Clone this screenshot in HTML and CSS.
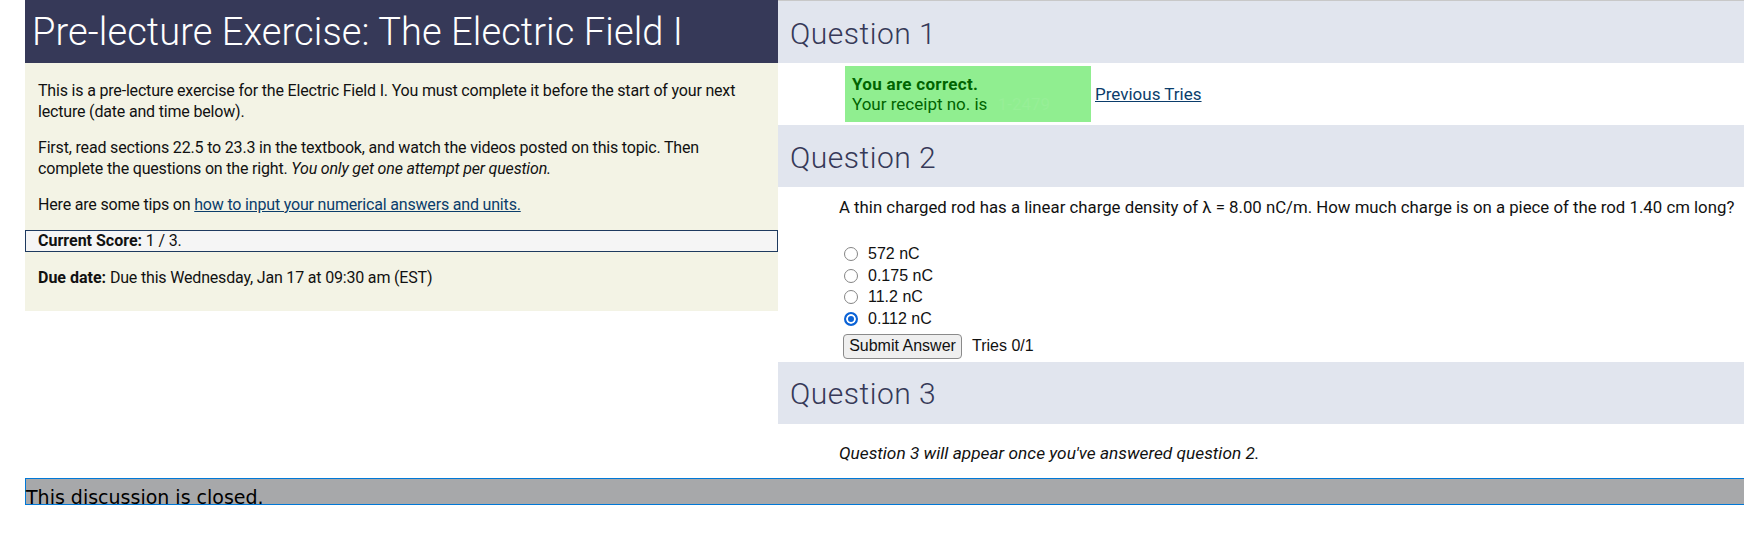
FILE: index.html
```html
<!DOCTYPE html>
<html lang="en">
<head>
<meta charset="utf-8">
<title>Pre-lecture Exercise: The Electric Field I</title>
<link rel="stylesheet" href="styles.css">
</head>
<body>
<div class="page">
  <div class="main">
    <div class="left">
      <h1 class="title">Pre-lecture Exercise: The Electric Field I</h1>
      <div class="intro">
        <p>This is a pre-lecture exercise for the Electric Field I. You must complete it before the start of your next lecture (date and time below).</p>
        <p>First, read sections 22.5 to 23.3 in the textbook, and watch the videos posted on this topic. Then complete the questions on the right. <em>You only get one attempt per question.</em></p>
        <p>Here are some tips on <a href="#" class="link">how to input your numerical answers and units.</a></p>
        <div class="score"><strong>Current Score:</strong> 1 / 3.</div>
        <p class="due"><strong>Due date:</strong> Due this Wednesday, Jan 17 at 09:30 am (EST)</p>
      </div>
    </div>
    <div class="right">
      <section class="question">
        <h2 class="q-head q-first">Question 1</h2>
        <div class="q1-body">
          <div class="correct"><strong>You are correct.</strong><br>Your receipt no. is <span class="receipt">1-2479</span></div>
          <a href="#" class="link tries-link">Previous Tries</a>
        </div>
      </section>
      <section class="question">
        <h2 class="q-head">Question 2</h2>
        <div class="q2-body">
          <p class="q-text">A thin charged rod has a linear charge density of λ = 8.00 nC/m. How much charge is on a piece of the rod 1.40 cm long?</p>
          <div class="options">
            <label class="option"><input type="radio" name="q2"> 572 nC</label>
            <label class="option"><input type="radio" name="q2"> 0.175 nC</label>
            <label class="option"><input type="radio" name="q2"> 11.2 nC</label>
            <label class="option"><input type="radio" name="q2" checked> 0.112 nC</label>
          </div>
          <div class="submit-row">
            <button type="button" class="submit">Submit Answer</button>
            <span class="tries">Tries 0/1</span>
          </div>
        </div>
      </section>
      <section class="question">
        <h2 class="q-head">Question 3</h2>
        <div class="q3-body">
          <p class="pending">Question 3 will appear once you've answered question 2.</p>
        </div>
      </section>
    </div>
  </div>
  <div class="closed">This discussion is closed.</div>
</div>
</body>
</html>
```
FILE: styles.css
```css
html, body {
  margin: 0;
  padding: 0;
  background: #ffffff;
}

body {
  font-family: Roboto, "Noto Sans", sans-serif;
  color: #1a1a1a;
}

.page {
  padding-left: 25px;
}

.main {
  display: flex;
  align-items: flex-start;
}

.left {
  width: 753px;
  flex: none;
}

.title {
  margin: 0;
  height: 63px;
  display: flex;
  align-items: center;
  padding-left: 7px;
  padding-top: 1px;
  box-sizing: border-box;
  background: #363958;
  color: #ffffff;
  font-weight: 300;
  font-size: 38px;
  letter-spacing: 0.1px;
  white-space: nowrap;
}

.intro {
  background: #f3f3e5;
  padding: 17px 13px 23px 13px;
  font-size: 16px;
  letter-spacing: -0.18px;
  line-height: 21px;
  color: #111;
}

.intro p {
  margin: 0 0 15px 0;
}

.intro p.due {
  margin: 0;
}

.intro strong {
  letter-spacing: 0;
}

.link {
  color: #0b3d6b;
  text-decoration: underline;
}

.score {
  margin: 0 -13px 15px -13px;
  border: 1px solid #1e3a5f;
  background: #f5f5f5;
  padding: 0 12px;
  line-height: 20px;
}

.right {
  flex: 1;
  min-width: 0;
  padding-bottom: 15px;
}

.q-head {
  margin: 0;
  height: 62px;
  display: flex;
  align-items: center;
  padding: 2px 0 0 12px;
  box-sizing: border-box;
  background: #e1e5ee;
  color: #363958;
  font-weight: 300;
  font-size: 30px;
  letter-spacing: 0.5px;
}

.q-first {
  border-top: 1px solid #c8c8c8;
  height: 63px;
}

.q1-body {
  display: flex;
  align-items: center;
  padding: 3px 0 3px 67px;
}

.correct {
  width: 246px;
  box-sizing: border-box;
  background: #90ee90;
  color: #006400;
  padding: 8px 7px;
  font-size: 17px;
  line-height: 20px;
}

.correct strong {
  letter-spacing: 0.3px;
}

.receipt {
  color: #97ef97;
  margin-left: 6px;
}

.tries-link {
  margin-left: 4px;
  font-size: 17px;
}

.q2-body {
  padding: 10px 0 3px 61px;
}

.q-text {
  margin: 0;
  font-size: 16.8px;
  color: #111;
}

.options {
  margin-top: 26px;
  font-family: "Liberation Sans", Arial, sans-serif;
  font-size: 16px;
  color: #111;
}

.option {
  display: flex;
  align-items: center;
  height: 21.7px;
}

.option input {
  appearance: none;
  -webkit-appearance: none;
  box-sizing: border-box;
  margin: 0 10px 0 5px;
  width: 14px;
  height: 14px;
  border: 1.5px solid #858585;
  border-radius: 50%;
  background: #ffffff;
}

.option input:checked {
  border: 2px solid #0b63d6;
  background: #0b63d6;
  box-shadow: inset 0 0 0 2px #ffffff;
}

.submit-row {
  display: flex;
  align-items: center;
  margin-top: 4px;
  font-family: "Liberation Sans", Arial, sans-serif;
  font-size: 16px;
  color: #111;
}

.submit {
  margin: 0 0 0 4px;
  height: 25px;
  width: 119px;
  padding: 0;
  font-family: "Liberation Sans", Arial, sans-serif;
  font-size: 16px;
  color: #111;
  background: #efefef;
  border: 1px solid #8a8a8a;
  border-radius: 4px;
}

.tries {
  margin-left: 10px;
}

.q3-body {
  padding: 19px 0 0 61px;
}

.pending {
  margin: 0;
  font-size: 17.3px;
  font-style: italic;
  color: #111;
}

.closed {
  height: 18px;
  padding-top: 7px;
  background: #a7a8aa;
  border-top: 1px solid #0078d7;
  border-bottom: 1px solid #0078d7;
  border-left: 1px solid #0078d7;
  font-family: "DejaVu Sans", Verdana, sans-serif;
  font-size: 19px;
  color: #000;
  white-space: nowrap;
}
```
